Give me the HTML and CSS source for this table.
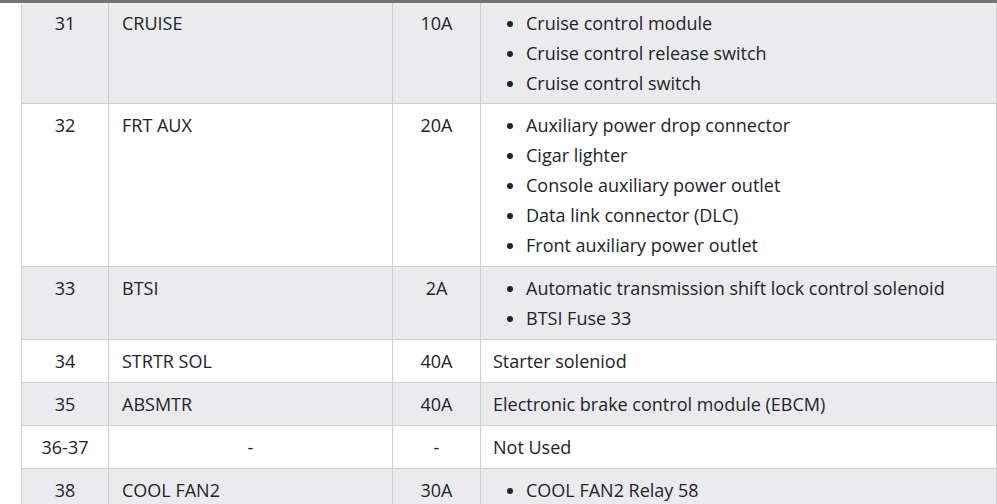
FILE: index.html
```html
<!DOCTYPE html>
<html>
<head>
<meta charset="utf-8">
<link rel="stylesheet" href="styles.css">
</head>
<body>
<div class="topbar"></div>
<table class="fuse">
  <colgroup>
    <col class="c-num"><col class="c-name"><col class="c-amp"><col class="c-desc">
  </colgroup>
  <tr class="shade first">
    <td class="num">31</td><td>CRUISE</td><td class="amp">10A</td>
    <td class="desc"><ul><li>Cruise control module</li><li>Cruise control release switch</li><li>Cruise control switch</li></ul></td>
  </tr>
  <tr>
    <td class="num">32</td><td>FRT AUX</td><td class="amp">20A</td>
    <td class="desc"><ul><li>Auxiliary power drop connector</li><li>Cigar lighter</li><li>Console auxiliary power outlet</li><li>Data link connector (DLC)</li><li>Front auxiliary power outlet</li></ul></td>
  </tr>
  <tr class="shade">
    <td class="num">33</td><td>BTSI</td><td class="amp">2A</td>
    <td class="desc"><ul><li>Automatic transmission shift lock control solenoid</li><li>BTSI Fuse 33</li></ul></td>
  </tr>
  <tr>
    <td class="num">34</td><td>STRTR SOL</td><td class="amp">40A</td>
    <td class="desc">Starter soleniod</td>
  </tr>
  <tr class="shade">
    <td class="num">35</td><td>ABSMTR</td><td class="amp">40A</td>
    <td class="desc">Electronic brake control module (EBCM)</td>
  </tr>
  <tr>
    <td class="num">36-37</td><td class="amp">-</td><td class="amp">-</td>
    <td class="desc">Not Used</td>
  </tr>
  <tr class="shade">
    <td class="num">38</td><td>COOL FAN2</td><td class="amp">30A</td>
    <td class="desc"><ul><li>COOL FAN2 Relay 58</li><li>Cooling fan 2</li></ul></td>
  </tr>
</table>
</body>
</html>
```
FILE: styles.css
```css
html, body {
  margin: 0;
  padding: 0;
  background: #fff;
  overflow: hidden;
}
body {
  font-family: "Open Sans", "Noto Sans", sans-serif;
  font-size: 18px;
  color: #22232a;
}
.topbar {
  height: 3px;
  background: #737373;
}
.fuse {
  margin-left: 21px;
  width: 976px;
  border-collapse: collapse;
  table-layout: fixed;
  margin-top: 0;
}
.c-num { width: 87px; }
.c-name { width: 284px; }
.c-amp { width: 88px; }
.c-desc { width: auto; }
.fuse td {
  border: 1px solid #cfcfd1;
  vertical-align: top;
  line-height: 30px;
  padding: 6px 13px 6px 13px;
}
.fuse td.desc {
  padding-left: 12px;
}
.fuse tr.first td {
  border-top: 1px solid #f4f4f5;
  padding-top: 4px;
  padding-bottom: 5px;
}
.fuse tr.shade td {
  background: #ebebed;
}
.fuse td.num, .fuse td.amp {
  text-align: center;
}
.fuse ul {
  margin: 0;
  padding-left: 33px;
}
```
